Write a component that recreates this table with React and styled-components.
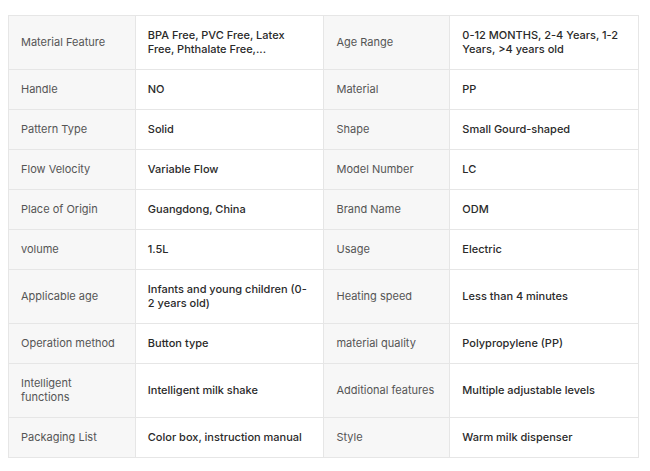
import React from "react";
import styled, { createGlobalStyle } from "styled-components";

const Global = createGlobalStyle`
  html, body { margin: 0; padding: 0; background: #fff; }
  body { font-family: Inter, "Noto Sans", Arial, sans-serif; }
`;

const Page = styled.div`
  padding: 15px 11px 13px 8px;
`;

const Table = styled.div`
  display: grid;
  grid-template-columns: 127fr 189fr 126fr 189fr;
  border-top: 1px solid #e6e6e6;
  border-left: 1px solid #e6e6e6;
`;

const Cell = styled.div`
  display: flex;
  align-items: center;
  min-height: 40px;
  box-sizing: border-box;
  padding: 12px 12px 13px 12px;
  border-right: 1px solid #e6e6e6;
  border-bottom: 1px solid #e6e6e6;
  font-size: 11px;
  line-height: 14px;
  background: ${(p) => (p.$label ? "#f7f7f7" : "#ffffff")};
  color: ${(p) => (p.$label ? "#555555" : "#2a2a2a")};
  font-weight: ${(p) => (p.$label ? 400 : 500)};
`;

const rows = [
  ["Material Feature", "BPA Free, PVC Free, Latex Free, Phthalate Free,...", "Age Range", "0-12 MONTHS, 2-4 Years, 1-2 Years, >4 years old"],
  ["Handle", "NO", "Material", "PP"],
  ["Pattern Type", "Solid", "Shape", "Small Gourd-shaped"],
  ["Flow Velocity", "Variable Flow", "Model Number", "LC"],
  ["Place of Origin", "Guangdong, China", "Brand Name", "ODM"],
  ["volume", "1.5L", "Usage", "Electric"],
  ["Applicable age", "Infants and young children (0-2 years old)", "Heating speed", "Less than 4 minutes"],
  ["Operation method", "Button type", "material quality", "Polypropylene (PP)"],
  ["Intelligent functions", "Intelligent milk shake", "Additional features", "Multiple adjustable levels"],
  ["Packaging List", "Color box, instruction manual", "Style", "Warm milk dispenser"],
];

export default function App() {
  return (
    <>
      <Global />
      <Page>
        <Table>
          {rows.map((r, i) => (
            <React.Fragment key={i}>
              <Cell $label>{r[0]}</Cell>
              <Cell>{r[1]}</Cell>
              <Cell $label>{r[2]}</Cell>
              <Cell>{r[3]}</Cell>
            </React.Fragment>
          ))}
        </Table>
      </Page>
    </>
  );
}
